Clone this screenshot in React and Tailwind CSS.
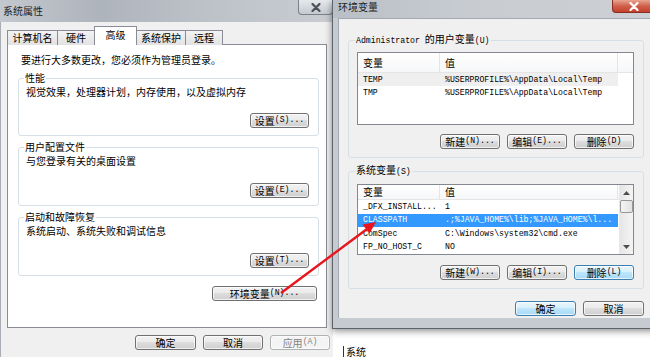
const latin = "font-['Liberation_Mono',monospace] text-[8.2px]";

const Lt = ({ children }) => <span className={latin}>{children}</span>;

const Button = ({ width, kind = "normal", children }) => {
  const look = {
    normal:
      "border-[#707070] bg-[linear-gradient(#f2f2f2_0%,#ebebeb_45%,#dddddd_50%,#cfcfcf_100%)] text-black",
    focus:
      "border-[#3c7fb1] bg-[linear-gradient(#eaf6fd_0%,#d9f0fc_45%,#bee6fd_50%,#a7d9f5_100%)] text-black",
    disabled: "border-[#adb2b5] bg-[#f4f4f4] text-[#838383]",
  }[kind];
  return (
    <div
      className={`flex h-[15px] items-center justify-center rounded-[3px] border leading-none shadow-[inset_0_0_0_1px_rgba(255,255,255,0.7)] ${look} ${width}`}
    >
      {children}
    </div>
  );
};

const Group = ({ title, className = "", children }) => (
  <fieldset className={`rounded-[3px] border border-[#d5dfe5] ${className}`}>
    <legend className="-ml-[2px] px-[1px] leading-[12px]">{title}</legend>
    {children}
  </fieldset>
);

const userVars = [
  ["TEMP", "%USERPROFILE%\\AppData\\Local\\Temp"],
  ["TMP", "%USERPROFILE%\\AppData\\Local\\Temp"],
];

const systemVars = [
  ["_DFX_INSTALL...", "1"],
  ["CLASSPATH", ".;%JAVA_HOME%\\lib;%JAVA_HOME%\\l...", true],
  ["ComSpec", "C:\\Windows\\system32\\cmd.exe"],
  ["FP_NO_HOST_C", "NO"],
];

const Header = () => (
  <div className="flex h-[20px] border-b border-[#e5e5e5] bg-[linear-gradient(#ffffff,#f6f7f9)]">
    <div className="flex w-[82px] items-center border-r border-[#e5e5e5] pl-[5px]">
      变量
    </div>
    <div className="flex w-[178px] items-center border-r border-[#e5e5e5] pl-[5px]">
      值
    </div>
  </div>
);

const Row = ({ name, value, selected, soft, h }) => (
  <div
    className={`flex w-[260px] items-center ${h} ${selected ? "bg-[#3399ff] text-white" : soft ? "bg-[#efefef]" : ""}`}
  >
    <div className={`w-[82px] pl-[5px] ${latin}`}>{name}</div>
    <div className={`pl-[5px] ${latin} whitespace-nowrap`}>{value}</div>
  </div>
);

const Triangle = ({ up }) => (
  <svg width="7" height="4" viewBox="0 0 7 4">
    <polygon points={up ? "0,4 7,4 3.5,0" : "0,0 7,0 3.5,4"} fill="#4d4d4d" />
  </svg>
);

const CloseX = ({ color }) => (
  <svg width="10" height="9" viewBox="0 0 10 9">
    <path d="M1.5 1 L8.5 8 M8.5 1 L1.5 8" stroke={color} strokeWidth="2.2" strokeLinecap="round" />
  </svg>
);

const SystemProperties = () => (
  <div className="absolute left-0 top-0 flex h-[357px] w-[333px] flex-col bg-[#c5cad0]">
    {/* title bar */}
    <div className="flex h-[22px] items-start justify-between bg-[linear-gradient(90deg,#c3c8ce,#aeb4bc_30%,#bcc1c8_60%,#c9cdd2)]">
      <span className="ml-[3px] mt-[5px] text-[#1e1e1e]">系统属性</span>
      <div className="flex h-[15px] w-[35px] items-center justify-center rounded-b-[4px] border border-t-0 border-[#7b818a] bg-[linear-gradient(#e6e9ec,#c4c9cf)]">
        <CloseX color="#4b5059" />
      </div>
    </div>

    <div className="flex flex-1 flex-col border-l border-[#a9aeb5] bg-[#f0f0f0] pl-[6px]">
      {/* tabs */}
      <div className="relative z-10 mt-[5px] flex h-[18px] items-end">
        <div className="flex h-[15px] w-[51px] items-center justify-center border border-b-0 border-[#898c95] bg-[linear-gradient(#f3f3f3,#e2e2e2)]">
          计算机名
        </div>
        <div className="-ml-px flex h-[15px] w-[38px] items-center justify-center border border-b-0 border-[#898c95] bg-[linear-gradient(#f3f3f3,#e2e2e2)]">
          硬件
        </div>
        <div className="-ml-px flex h-[19px] w-[43px] items-start justify-center border border-b-0 border-[#898c95] bg-white pt-[2px]">
          高级
        </div>
        <div className="-ml-px flex h-[15px] w-[50px] items-center justify-center border border-b-0 border-[#898c95] bg-[linear-gradient(#f3f3f3,#e2e2e2)]">
          系统保护
        </div>
        <div className="-ml-px flex h-[15px] w-[38px] items-center justify-center border border-b-0 border-[#898c95] bg-[linear-gradient(#f3f3f3,#e2e2e2)]">
          远程
        </div>
      </div>

      {/* tab page */}
      <div className="-mt-px flex h-[284px] w-[320px] flex-col border border-[#898c95] bg-white pt-[9px]">
        <p className="pl-[13px]">要进行大多数更改，您必须作为管理员登录。</p>

        <Group title="性能" className="ml-[10px] mt-[6px] w-[301px] pb-[7px] pl-[7px] pr-[9px]">
          <p className="mt-[2px]">视觉效果，处理器计划，内存使用，以及虚拟内存</p>
          <div className="mt-[15px] flex justify-end">
            <Button width="w-[59px]">
              设置<Lt>(S)...</Lt>
            </Button>
          </div>
        </Group>

        <Group title="用户配置文件" className="ml-[10px] mt-[5px] w-[301px] pb-[7px] pl-[7px] pr-[9px]">
          <p className="mt-[2px]">与您登录有关的桌面设置</p>
          <div className="mt-[16px] flex justify-end">
            <Button width="w-[59px]">
              设置<Lt>(E)...</Lt>
            </Button>
          </div>
        </Group>

        <Group title="启动和故障恢复" className="ml-[10px] mt-[5px] w-[301px] pb-[7px] pl-[7px] pr-[9px]">
          <p className="mt-[2px]">系统启动、系统失败和调试信息</p>
          <div className="mt-[16px] flex justify-end">
            <Button width="w-[59px]">
              设置<Lt>(T)...</Lt>
            </Button>
          </div>
        </Group>

        <div className="mr-[9px] mt-[10px] flex justify-end">
          <Button width="w-[105px]">
            环境变量<Lt>(N)...</Lt>
          </Button>
        </div>
      </div>

      {/* dialog buttons */}
      <div className="mt-[7px] flex gap-[7px] pl-[128px]">
        <Button width="w-[61px]">确定</Button>
        <Button width="w-[60px]">取消</Button>
        <Button width="w-[60px]" kind="disabled">
          应用<Lt>(A)</Lt>
        </Button>
      </div>
    </div>
  </div>
);

const EnvironmentVariables = () => (
  <div className="absolute left-[332px] top-0 flex h-[329px] w-[330px] flex-col border-b border-l border-[#5d636b] bg-[#c6cbd1] shadow-[0_2px_7px_rgba(0,0,0,0.45)]">
    {/* title bar */}
    <div className="flex h-[18px] items-start justify-between bg-[linear-gradient(90deg,#b9bfc6,#c8ccd1_40%,#cdd1d6)]">
      <span className="ml-[5px] mt-[1px] text-[#1e1e1e]">环境变量</span>
      <div className="mr-[7px] flex h-[13px] w-[43px] items-center justify-center rounded-b-[4px] border border-t-0 border-[#8a2e23] bg-[linear-gradient(#e8a592,#d0604a_50%,#c2412c)]">
        <CloseX color="#ffffff" />
      </div>
    </div>

    <div className="ml-[5px] flex h-[300px] flex-col border-l border-t border-[#a3a9b1] bg-[#f0f0f0] pl-[9px]">
      <Group
        title={
          <>
            <Lt>Administrator </Lt>的用户变量<Lt>(U)</Lt>
          </>
        }
        className="mt-[14px] w-[296px] pb-[8px] pl-[8px]"
      >
        <div className="mt-[5px] flex h-[73px] w-[277px] flex-col border border-[#828790] bg-white">
          <div className="flex">
            <Header />
            <div className="h-[20px] flex-1 border-b border-[#e5e5e5] bg-[linear-gradient(#ffffff,#f6f7f9)]" />
          </div>
          {userVars.map(([name, value], i) => (
            <Row key={name} name={name} value={value} soft={i === 0} h="h-[13px]" />
          ))}
        </div>
        <div className="mt-[9px] flex w-[277px] justify-end gap-[7px]">
          <Button width="w-[60px]">
            新建<Lt>(N)...</Lt>
          </Button>
          <Button width="w-[60px]">
            编辑<Lt>(E)...</Lt>
          </Button>
          <Button width="w-[60px]">
            删除<Lt>(D)</Lt>
          </Button>
        </div>
      </Group>

      <Group
        title={
          <>
            系统变量<Lt>(S)</Lt>
          </>
        }
        className="mt-[6px] w-[296px] pb-[8px] pl-[8px]"
      >
        <div className="mt-[6px] flex h-[71px] w-[277px] border border-[#828790] bg-white">
          <div className="flex w-[261px] flex-col overflow-hidden">
            <Header />
            {systemVars.map(([name, value, selected]) => (
              <Row key={name} name={name} value={value} selected={selected} h="h-[13.5px] shrink-0" />
            ))}
          </div>
          <div className="flex w-[14px] flex-col items-center border-l border-[#e8e8e8] bg-[linear-gradient(90deg,#e6e6e6,#f4f4f4)]">
            <div className="flex h-[15px] items-center">
              <Triangle up />
            </div>
            <div className="h-[13px] w-[13px] rounded-[2px] border border-[#979797] bg-[linear-gradient(90deg,#f4f4f4,#e2e2e2)]" />
            <div className="flex-1" />
            <div className="flex h-[14px] items-center">
              <Triangle />
            </div>
          </div>
        </div>
        <div className="mt-[10px] flex w-[277px] justify-end gap-[7px]">
          <Button width="w-[60px]">
            新建<Lt>(W)...</Lt>
          </Button>
          <Button width="w-[60px]">
            编辑<Lt>(I)...</Lt>
          </Button>
          <Button width="w-[60px]" kind="focus">
            删除<Lt>(L)</Lt>
          </Button>
        </div>
      </Group>

      <div className="mt-[12px] flex w-[296px] justify-end gap-[7px]">
        <Button width="w-[61px]" kind="focus">
          确定
        </Button>
        <Button width="w-[61px]">取消</Button>
      </div>
    </div>
  </div>
);

const Arrow = () => (
  <svg className="pointer-events-none absolute left-0 top-0" width="650" height="357" viewBox="0 0 650 357">
    <line x1="281" y1="293" x2="367" y2="229" stroke="#e8161c" strokeWidth="2.4" />
    <polygon points="376,222 369.5,233.5 362.5,224.5" fill="#e8161c" />
  </svg>
);

export default function App() {
  return (
    <div className="relative h-[357px] w-[650px] overflow-hidden bg-white font-['Noto_Sans_CJK_SC',sans-serif] text-[10px] leading-[12px] text-black">
      <SystemProperties />
      <EnvironmentVariables />
      <div className="absolute left-[343px] top-[346px] flex items-start gap-[2px]">
        <div className="h-[11px] w-px bg-[#333]" />
        <span>系统</span>
      </div>
      <Arrow />
    </div>
  );
}
